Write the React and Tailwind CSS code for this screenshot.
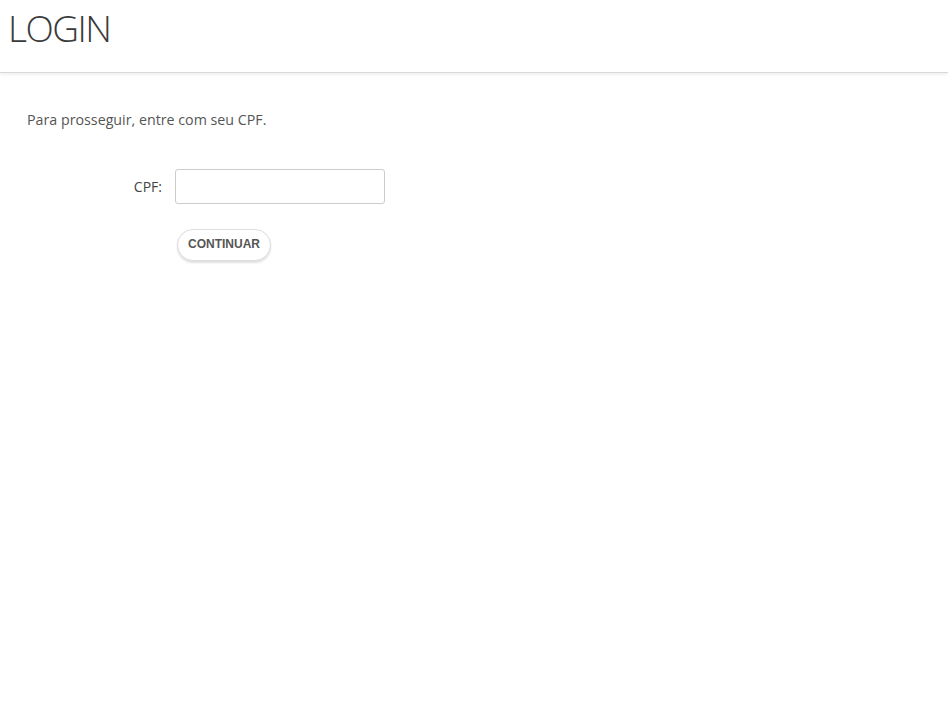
export default function App() {
  return (
    <div className="min-h-screen bg-white" style={{ fontFamily: '"Open Sans", "Noto Sans", sans-serif' }}>
      <header className="h-[73px] border-b border-[#d9d9d9] shadow-[0_2px_3px_rgba(0,0,0,0.06)]">
        <h1 className="pl-[8px] pt-[4px] text-[37px] font-light leading-[48px] tracking-[-1.5px] text-[#3a3a3a]">LOGIN</h1>
      </header>

      <main className="px-[27px] pt-[37px]">
        <p className="text-[14.25px] leading-[20px] text-[#555]">Para prosseguir, entre com seu CPF.</p>

        <form className="mt-[39px]" onSubmit={(e) => e.preventDefault()}>
          <div className="flex items-center">
            <label htmlFor="cpf" className="w-[148px] pr-[13px] text-right text-[14px] text-[#444]">CPF:</label>
            <input
              id="cpf"
              type="text"
              className="h-[35px] w-[210px] rounded-[3px] border border-[#ccc] px-2 text-sm outline-none"
            />
          </div>
          <div className="mt-[25px] pl-[150px]">
            <button
              type="submit"
              className="h-[32px] rounded-full border border-[#ddd] bg-white px-[10px] pb-[2px] text-[12px] font-bold text-[#555] shadow-[0_2px_2px_rgba(0,0,0,0.12)]"
              style={{ fontFamily: '"Liberation Sans", Arial, sans-serif' }}
            >
              CONTINUAR
            </button>
          </div>
        </form>
      </main>
    </div>
  );
}
